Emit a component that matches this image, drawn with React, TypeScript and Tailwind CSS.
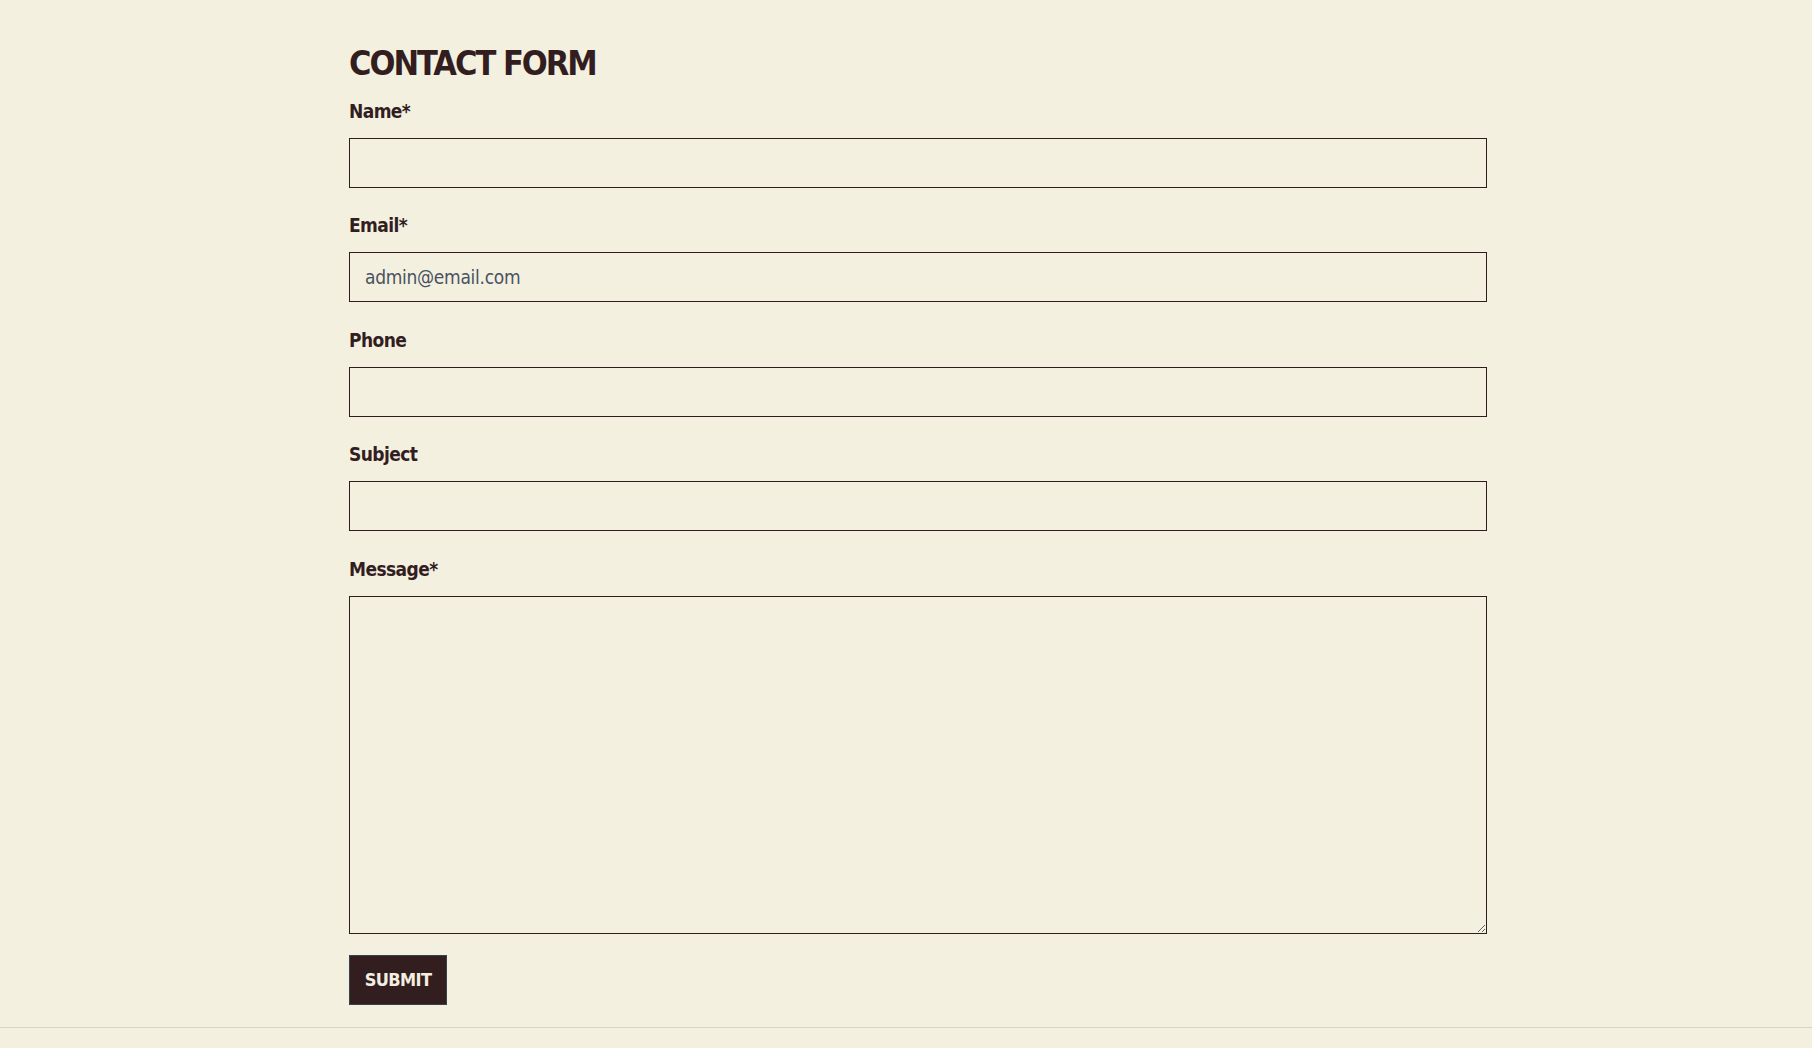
import React from "react";

const font = { fontFamily: '"DejaVu Sans Condensed", "DejaVu Sans", sans-serif', fontStretch: "condensed" as const };

function Field({ label, children }: { label: string; children: React.ReactNode }) {
  return (
    <div className="flex flex-col">
      <label className="block text-[19px] leading-[24px] font-bold text-[#331e1f] mb-[15px] tracking-[-0.6px]">{label}</label>
      {children}
    </div>
  );
}

export default function App() {
  const inputCls =
    "block w-full h-[50px] border border-[#2f1c1d] bg-transparent px-[15px] text-[19px] text-[#4a5260] outline-none tracking-[-0.3px]";
  return (
    <div className="min-h-[1048px] w-full bg-[#f3f0e0] flex flex-col" style={font}>
      <div className="pl-[349px] pt-[44px] w-[1487px]">
        <h1 className="text-[34px] leading-[38px] font-bold text-[#331e1f] tracking-[-2px] mb-[17px]">CONTACT FORM</h1>
        <form className="flex flex-col gap-[25.4px]" onSubmit={(e) => e.preventDefault()}>
          <Field label="Name*">
            <input className={inputCls} style={font} />
          </Field>
          <Field label="Email*">
            <input className={inputCls} style={font} defaultValue="admin@email.com" />
          </Field>
          <Field label="Phone">
            <input className={inputCls} style={font} />
          </Field>
          <Field label="Subject">
            <input className={inputCls} style={font} />
          </Field>
          <Field label="Message*">
            <textarea className="block w-full h-[338px] border border-[#2f1c1d] bg-transparent px-[15px] py-2 text-[19px] text-[#4a5260] outline-none" style={font} />
          </Field>
        </form>
        <div className="mt-[21px] mb-[22px]">
          <button className="h-[50px] w-[98px] bg-[#331e1f] border border-[#374151] text-[#f3efe0] text-[18px] font-bold tracking-[-0.6px]" style={font}>
            SUBMIT
          </button>
        </div>
      </div>
      <div className="border-t border-[#d9d5c5] flex-1" />
    </div>
  );
}
